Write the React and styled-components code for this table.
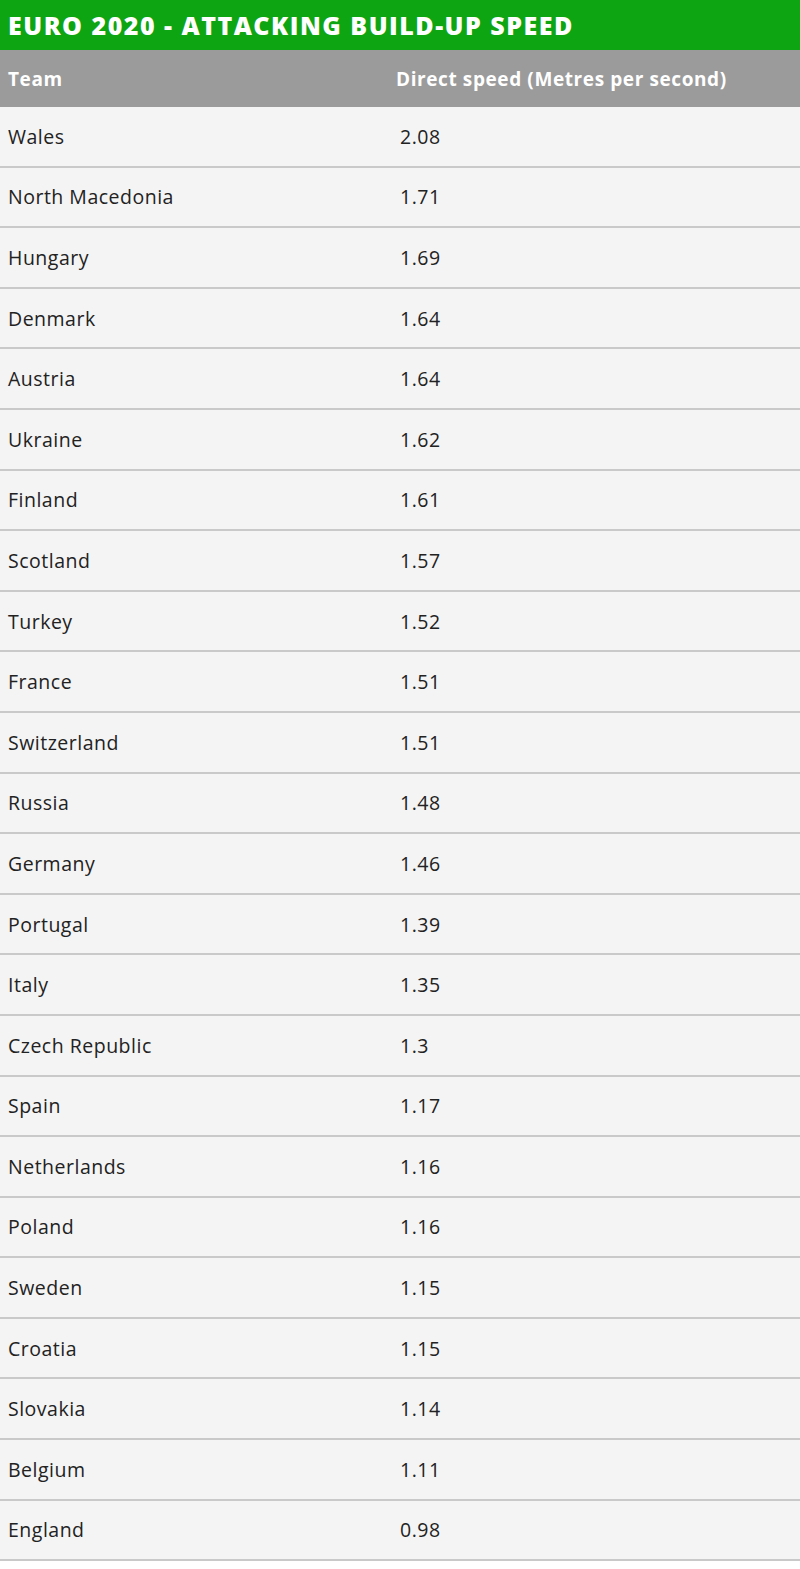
import React from "react";
import styled, { createGlobalStyle } from "styled-components";

const GlobalStyle = createGlobalStyle`
  html, body {
    margin: 0;
    padding: 0;
    background: #ffffff;
  }
  body {
    font-family: "Open Sans", "Liberation Sans", sans-serif;
  }
`;

const ROWS = [
  ["Wales", "2.08"],
  ["North Macedonia", "1.71"],
  ["Hungary", "1.69"],
  ["Denmark", "1.64"],
  ["Austria", "1.64"],
  ["Ukraine", "1.62"],
  ["Finland", "1.61"],
  ["Scotland", "1.57"],
  ["Turkey", "1.52"],
  ["France", "1.51"],
  ["Switzerland", "1.51"],
  ["Russia", "1.48"],
  ["Germany", "1.46"],
  ["Portugal", "1.39"],
  ["Italy", "1.35"],
  ["Czech Republic", "1.3"],
  ["Spain", "1.17"],
  ["Netherlands", "1.16"],
  ["Poland", "1.16"],
  ["Sweden", "1.15"],
  ["Croatia", "1.15"],
  ["Slovakia", "1.14"],
  ["Belgium", "1.11"],
  ["England", "0.98"],
];

export default function App() {
  return (
    <>
      <GlobalStyle />
      <Wrapper>
        <Title>EURO 2020 - ATTACKING BUILD-UP SPEED</Title>
        <Table>
          <HeadRow>
            <HeadCell>Team</HeadCell>
            <HeadCell>Direct speed (Metres per second)</HeadCell>
          </HeadRow>
          {ROWS.map(([team, speed]) => (
            <Row key={team}>
              <Cell>{team}</Cell>
              <Cell numeric>{speed}</Cell>
            </Row>
          ))}
        </Table>
      </Wrapper>
    </>
  );
}

const Wrapper = styled.div`
  width: 800px;
`;

const Title = styled.div`
  height: 50px;
  display: flex;
  align-items: center;
  padding: 0 8px;
  box-sizing: border-box;
  background: #0ea512;
  color: #ffffff;
  font-size: 25px;
  font-weight: 800;
  letter-spacing: 1.5px;
`;

const Table = styled.div`
  display: flex;
  flex-direction: column;
`;

const HeadRow = styled.div`
  display: grid;
  grid-template-columns: 388px 1fr;
  height: 57px;
  align-items: center;
  background: #9b9b9b;
`;

const HeadCell = styled.div`
  padding: 0 8px;
  color: #ffffff;
  font-size: 19px;
  font-weight: 700;
  letter-spacing: 0.6px;
`;

const Row = styled.div`
  display: grid;
  grid-template-columns: 388px 1fr;
  height: 60.6px;
  box-sizing: border-box;
  align-items: center;
  background: #f4f4f4;
  border-bottom: 2px solid #c9c9c9;
`;

const Cell = styled.div`
  padding: ${(p) => (p.numeric ? "0 8px 0 12px" : "0 8px")};
  color: #222222;
  font-size: 19.5px;
  letter-spacing: 0.5px;
`;
